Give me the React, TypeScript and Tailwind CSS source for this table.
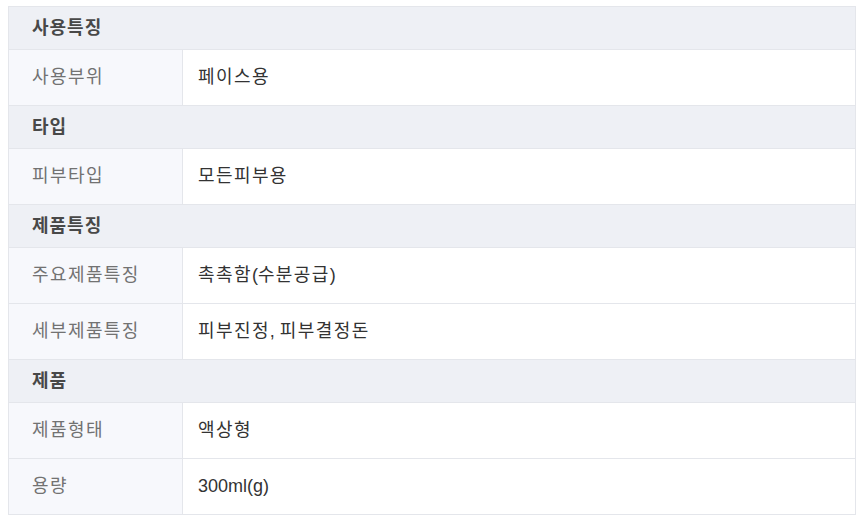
// hangul runs get a bit of tracking so they match the wider reference glyphs
function ko(text: string) {
  return text.split(/([가-힣]+)/).map((part, i) =>
    /[가-힣]/.test(part) ? (
      <span key={i} className="tracking-[1.4px]">
        {part}
      </span>
    ) : (
      part
    )
  )
}

export default function App() {
  const sections = [
    { title: '사용특징', rows: [['사용부위', '페이스용']] },
    { title: '타입', rows: [['피부타입', '모든피부용']] },
    {
      title: '제품특징',
      rows: [
        ['주요제품특징', '촉촉함(수분공급)'],
        ['세부제품특징', '피부진정, 피부결정돈'],
      ],
    },
    {
      title: '제품',
      rows: [
        ['제품형태', '액상형'],
        ['용량', '300ml(g)'],
      ],
    },
  ]

  return (
    <div
      className="min-h-screen bg-white pt-[6px] pl-[8px]"
      style={{ fontFamily: '"Liberation Sans", "Noto Sans CJK KR", sans-serif' }}
    >
      <div className="w-[848px] border border-[#e4e6eb] border-b-0 text-[18px]">
        {sections.map((section) => (
          <div key={section.title}>
            {/* section header */}
            <div className="h-[43px] flex items-center pl-[23px] bg-[#eef0f5] border-b border-[#e4e6eb] font-bold text-[#484848]">
              <span className="tracking-[1px]">{section.title}</span>
            </div>
            {section.rows.map(([label, value]) => (
              <div key={label} className="h-[56px] flex border-b border-[#e4e6eb]">
                <div className="w-[174px] flex items-center pl-[23px] bg-[#f7f8fc] border-r border-[#e4e6eb] text-[#727272]">
                  <span>{ko(label)}</span>
                </div>
                <div className="flex-1 flex items-center pl-[15px] text-[#333]">
                  <span>{ko(value)}</span>
                </div>
              </div>
            ))}
          </div>
        ))}
      </div>
    </div>
  )
}
